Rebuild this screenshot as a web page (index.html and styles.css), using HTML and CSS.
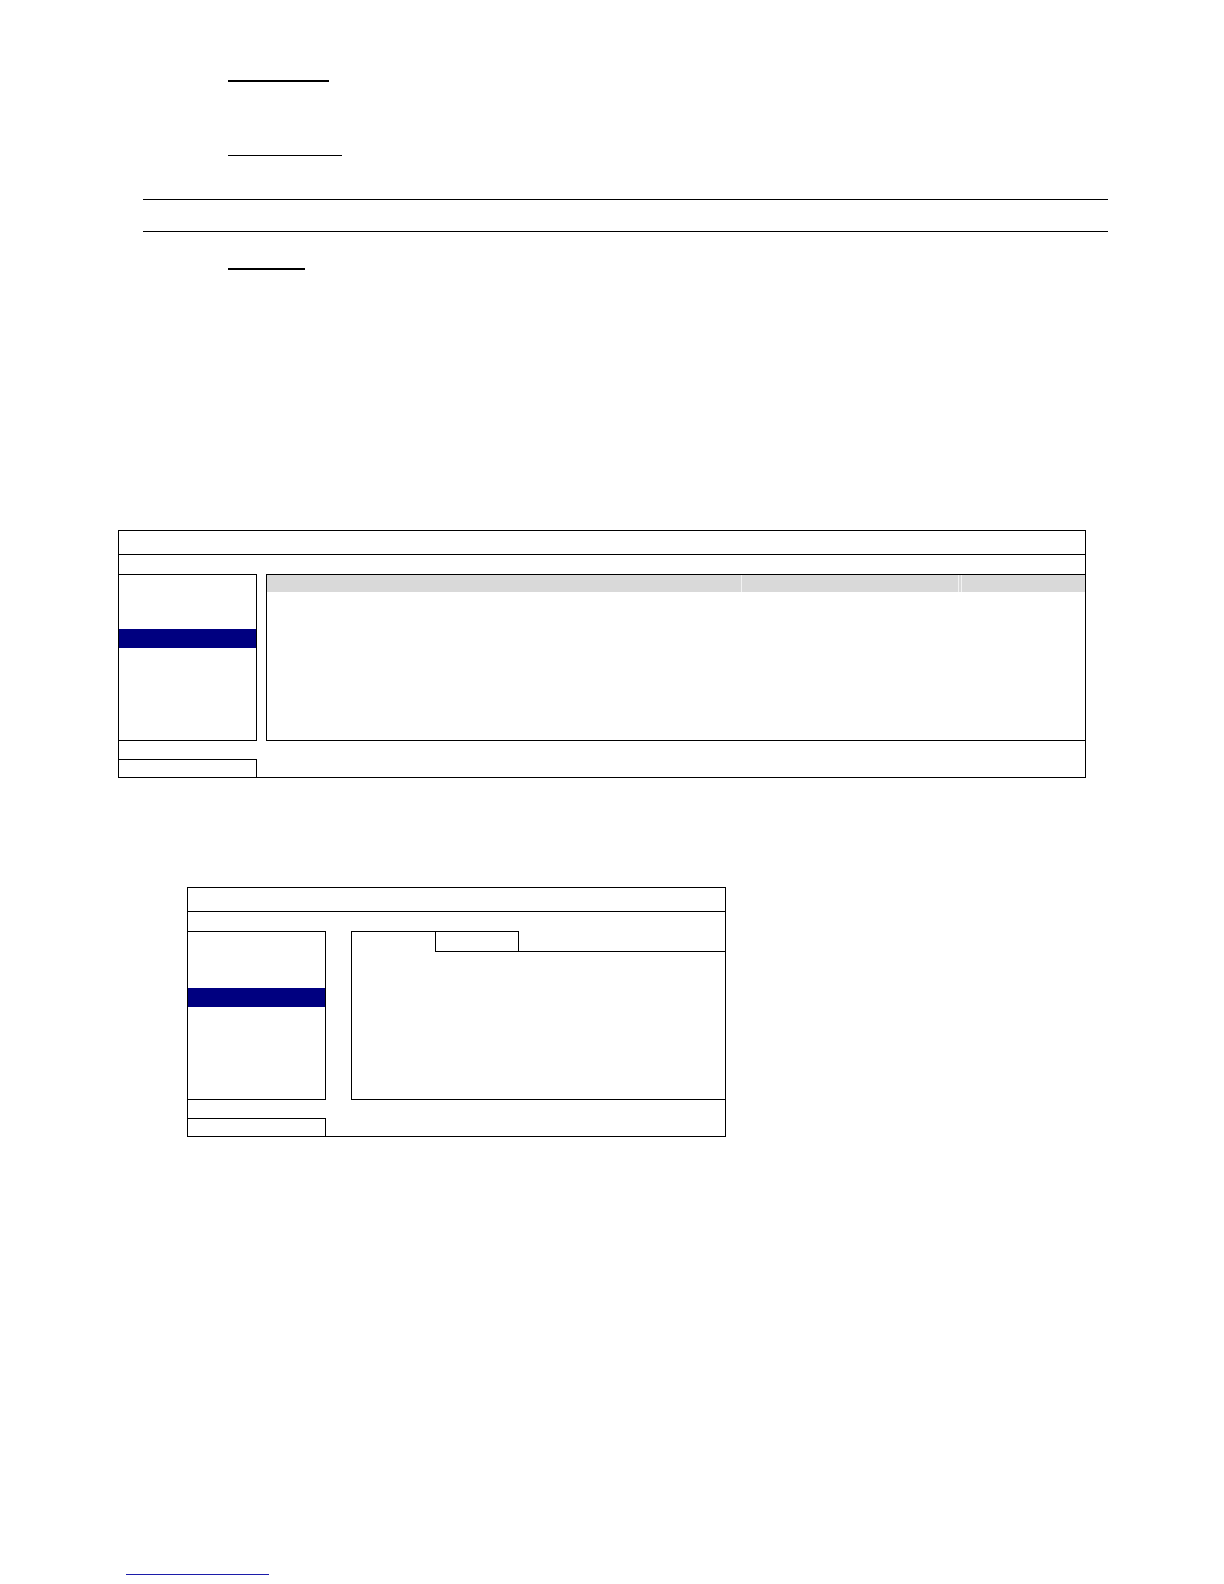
FILE: index.html
```html
<!DOCTYPE html>
<html lang="en">
<head>
<meta charset="utf-8">
<title>Document page</title>
<link rel="stylesheet" href="styles.css">
</head>
<body>
<div class="page">
  <div class="heading-line heading-a"></div>
  <div class="heading-line heading-b"></div>
  <div class="note-band"></div>
  <div class="heading-line heading-c"></div>

  <div class="win win-wide">
    <div class="win-title"></div>
    <div class="win-sub"></div>
    <div class="win-main">
      <div class="side">
        <div class="side-item"></div>
        <div class="side-item"></div>
        <div class="side-item"></div>
        <div class="side-item selected"></div>
      </div>
      <div class="panel panel-table">
        <div class="thead">
          <div class="th th-1"></div>
          <div class="th th-2"></div>
          <div class="th th-gap"></div>
          <div class="th th-3"></div>
        </div>
      </div>
    </div>
    <div class="win-foot"><div class="foot-btn"></div></div>
  </div>

  <div class="win win-narrow">
    <div class="win-title"></div>
    <div class="win-sub"></div>
    <div class="win-main">
      <div class="side">
        <div class="side-item"></div>
        <div class="side-item"></div>
        <div class="side-item"></div>
        <div class="side-item selected"></div>
      </div>
      <div class="panel panel-tabs">
        <div class="tabs">
          <div class="tab tab-active"></div>
          <div class="tab tab-idle"></div>
          <div class="tab-fill"></div>
        </div>
      </div>
    </div>
    <div class="win-foot"><div class="foot-btn"></div></div>
  </div>

  <div class="link-line"></div>
</div>
</body>
</html>
```

FILE: styles.css
```css
html, body {
  margin: 0;
  padding: 0;
  background: #ffffff;
  font-family: "Liberation Serif", "Times New Roman", serif;
}

.page {
  width: 1224px;
  min-height: 1584px;
  box-sizing: border-box;
  padding-top: 80px;
}

.heading-line {
  margin-left: 228px;
  height: 0;
}
.heading-a {
  width: 101px;
  border-top: 2px solid #000;
}
.heading-b {
  margin-top: 73px;
  width: 114px;
  border-top: 1px solid #000;
}
.heading-c {
  margin-top: 36px;
  width: 77px;
  border-top: 2px solid #000;
}

.note-band {
  margin-top: 43px;
  margin-left: 143px;
  width: 965px;
  height: 31px;
  border-top: 1px solid #000;
  border-bottom: 1px solid #000;
}

/* window mock-ups */
.win {
  box-sizing: border-box;
  height: 248px;
  border: 1px solid #000;
  display: flex;
  flex-direction: column;
}
.win-wide {
  margin-top: 260px;
  margin-left: 118px;
  width: 968px;
}
.win-narrow {
  margin-top: 109px;
  margin-left: 187px;
  width: 539px;
  height: 250px;
}

.win-title {
  height: 23px;
  border-bottom: 1px solid #000;
  flex: none;
}
.win-sub {
  height: 19px;
  flex: none;
}
.win-main {
  height: 167px;
  flex: none;
  display: flex;
}
.win-narrow .win-main {
  height: 169px;
}

.side {
  box-sizing: border-box;
  width: 138px;
  flex: none;
  border-top: 1px solid #000;
  border-right: 1px solid #000;
  border-bottom: 1px solid #000;
  display: flex;
  flex-direction: column;
}
.side-item {
  height: 18px;
  flex: none;
}
.win-narrow .side-item {
  height: 18.67px;
}
.side-item.selected,
.win-narrow .side-item.selected {
  background: #000080;
  height: 19px;
}

.panel {
  box-sizing: border-box;
  flex: 1;
  border-left: 1px solid #000;
  border-bottom: 1px solid #000;
}
.panel-table {
  margin-left: 9px;
  border-top: 1px solid #000;
}
.panel-tabs {
  margin-left: 25px;
}

.thead {
  display: flex;
  height: 17px;
}
.th {
  background: #d9d9d9;
  height: 100%;
}
.th-1 {
  width: 474px;
  border-right: 1px solid #f2f2f2;
}
.th-2 {
  width: 216px;
  border-right: 1px solid #f2f2f2;
}
.th-gap {
  width: 2px;
  border-right: 1px solid #f2f2f2;
}
.th-3 {
  flex: 1;
}

.tabs {
  display: flex;
  height: 21px;
}
.tab {
  box-sizing: border-box;
  height: 21px;
  border-top: 1px solid #000;
}
.tab-active {
  width: 83px;
}
.tab-idle {
  width: 84px;
  border-left: 1px solid #000;
  border-right: 1px solid #000;
  border-bottom: 1px solid #000;
}
.tab-fill {
  flex: 1;
  box-sizing: border-box;
  height: 21px;
  border-bottom: 1px solid #000;
}

.win-foot {
  flex: 1;
  display: flex;
  flex-direction: column;
  justify-content: flex-end;
}
.foot-btn {
  box-sizing: border-box;
  width: 138px;
  height: 18px;
  border-top: 1px solid #000;
  border-right: 1px solid #000;
}

.link-line {
  margin-top: 437px;
  margin-left: 126px;
  width: 143px;
  height: 0;
  border-top: 1px solid #1c1caa;
}
```
